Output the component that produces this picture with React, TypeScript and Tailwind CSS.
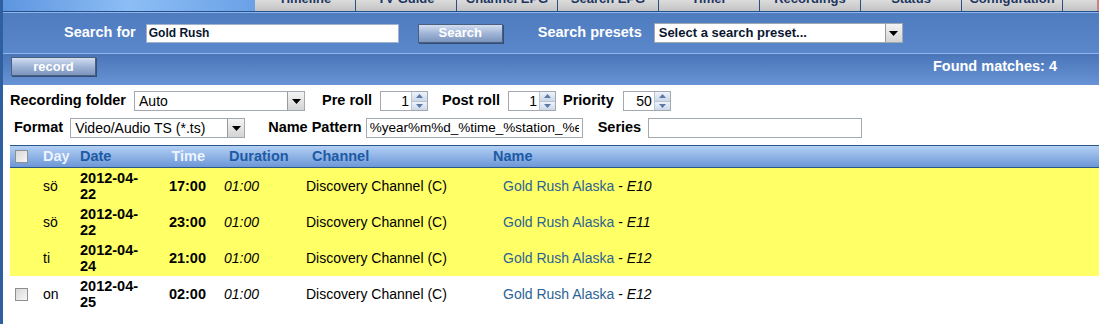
import React from "react";

const tabs = ["Timeline", "TV Guide", "Channel EPG", "Search EPG", "Timer", "Recordings", "Status", "Configuration"];

const rows = [
  { day: "sö", d1: "2012-04-", d2: "22", time: "17:00", ep: "E10", hl: true },
  { day: "sö", d1: "2012-04-", d2: "22", time: "23:00", ep: "E11", hl: true },
  { day: "ti", d1: "2012-04-", d2: "24", time: "21:00", ep: "E12", hl: true },
  { day: "on", d1: "2012-04-", d2: "25", time: "02:00", ep: "E12", hl: false },
];

const Arrow = () => (
  <div className="w-[17px] h-full flex items-center justify-center bg-gradient-to-b from-[#f4f4f4] to-[#d4d4d4] border-l border-[#9a9a9a]">
    <svg width="9" height="5" viewBox="0 0 9 5">
      <path d="M0 0h9L4.5 5z" fill="#000" />
    </svg>
  </div>
);

const Select = ({ w, text, bold }: { w: string; text: string; bold?: boolean }) => (
  <div className={`${w} h-[20px] flex border border-[#a3a9b1] bg-white`}>
    <div className={`flex-1 px-[4px] leading-[18px] truncate ${bold ? "font-bold text-[13px] text-[#0a1630]" : "text-[14px]"}`}>{text}</div>
    <Arrow />
  </div>
);

const Spin = ({ v }: { v: string }) => (
  <div className="w-[48px] h-[20px] flex border border-[#a3a9b1] bg-white">
    <div className="flex-1 text-right pr-[2px] leading-[18px] text-[14px]">{v}</div>
    <div className="w-[16px] flex flex-col border-l border-[#b9c4d4]">
      <div className="flex-1 flex items-center justify-center bg-gradient-to-b from-[#eef3fa] to-[#cbd7e8] border-b border-[#b9c4d4]">
        <svg width="7" height="4" viewBox="0 0 7 4"><path d="M0 4h7L3.5 0z" fill="#5b79a6" /></svg>
      </div>
      <div className="flex-1 flex items-center justify-center bg-gradient-to-b from-[#eef3fa] to-[#cbd7e8]">
        <svg width="7" height="4" viewBox="0 0 7 4"><path d="M0 0h7L3.5 4z" fill="#5b79a6" /></svg>
      </div>
    </div>
  </div>
);

const Check = () => (
  <div className="w-[13px] h-[13px] border border-[#8e8f8f] bg-gradient-to-br from-[#d6d6d6] to-[#f8f8f8]" />
);

const BlueButton = ({ label }: { label: string }) => (
  <div className="w-[85px] h-[19px] flex items-center justify-center border border-[#4a5f80] bg-gradient-to-b from-[#d3def0] via-[#9fb4d6] to-[#7d95bd] text-white font-bold text-[13px] shadow-[1px_1px_0_#33507a]">
    {label}
  </div>
);

export default function App() {
  return (
    <div className="w-[1099px] h-[324px] overflow-hidden bg-white border-l-[3px] border-[#2e5f9f] font-['Liberation_Sans',Arial,sans-serif] text-[14px] text-black">
      {/* top tabs */}
      <div className="h-[11px] flex overflow-hidden">
        <div className="w-[252px] bg-gradient-to-r from-[#5d95df] via-[#8dbdf4] to-[#6aa1e7]" />
        {tabs.map((t) => (
          <div key={t} className="w-[101px] border-r border-[#2b4f80] bg-gradient-to-b from-[#dcdcdc] to-[#c3c3c3] text-center text-[13px] leading-[13px] text-[#1c3560] font-bold">
            <div className="-mt-[8px]">{t}</div>
          </div>
        ))}
        <div className="flex-1 bg-gradient-to-b from-[#dcdcdc] to-[#c3c3c3] border-r-2 border-[#d08080]" />
      </div>
      <div className="h-[1px] bg-[#23508f]" />
      <div className="h-[1px] bg-[#8fb5ea]" />
      {/* search bar */}
      <div className="h-[40px] bg-gradient-to-b from-[#4f7bbf] to-[#5a88cb] flex items-center">
        <span className="ml-[61px] text-white font-bold text-[14.5px]">Search for</span>
        <div className="ml-[10px] w-[253px] h-[19px] bg-white border border-[#9fb2cf] pl-[2px] leading-[17px] font-bold text-[12px] text-[#0a1630]">Gold Rush</div>
        <div className="ml-[19px]"><BlueButton label="Search" /></div>
        <span className="ml-[35px] text-white font-bold text-[14.5px]">Search presets</span>
        <div className="ml-[12px]"><Select w="w-[249px]" text="Select a search preset..." bold /></div>
      </div>
      <div className="h-[1px] bg-[#8fb6ec]" />
      {/* record bar */}
      <div className="h-[31px] bg-gradient-to-b from-[#4a75b8] to-[#6894d6] flex items-center justify-between pl-[8px] pr-[42px]">
        <div className="-mt-[6px]"><BlueButton label="record" /></div>
        <span className="text-white font-bold text-[14.5px] -mt-[5px]">Found matches: 4</span>
      </div>
      {/* form */}
      <div className="pt-[6px] pl-[7px]">
        <div className="flex items-center h-[20px]">
          <span className="font-bold text-[14.5px]">Recording folder</span>
          <div className="ml-[8px]"><Select w="w-[171px]" text="Auto" /></div>
          <span className="ml-[17px] font-bold text-[14.5px]">Pre roll</span>
          <div className="ml-[8px]"><Spin v="1" /></div>
          <span className="ml-[14px] font-bold text-[14.5px]">Post roll</span>
          <div className="ml-[8px]"><Spin v="1" /></div>
          <span className="ml-[7px] font-bold text-[14.5px]">Priority</span>
          <div className="ml-[9px]"><Spin v="50" /></div>
        </div>
        <div className="flex items-center h-[20px] mt-[7px] pl-[4px]">
          <span className="font-bold text-[14.5px]">Format</span>
          <div className="ml-[7px]"><Select w="w-[175px]" text="Video/Audio TS (*.ts)" /></div>
          <span className="ml-[23px] font-bold text-[14.5px]">Name Pattern</span>
          <div className="ml-[4px] w-[217px] h-[20px] border border-[#a3a9b1] px-[3px] leading-[18px] overflow-hidden text-[13.5px]">
            <div className="w-[209px] overflow-hidden whitespace-nowrap">%year%m%d_%time_%station_%ev</div>
          </div>
          <span className="ml-[15px] font-bold text-[14.5px]">Series</span>
          <div className="ml-[7px] w-[214px] h-[20px] border border-[#a3a9b1]" />
        </div>
      </div>
      {/* table */}
      <div className="ml-[7px] mt-[7px]">
        <div className="h-[23px] flex items-center border-y border-[#2a5688] bg-gradient-to-b from-[#b3d0f4] to-[#6c97d7] font-bold text-[14.5px]">
          <div className="w-[33px] pl-[5px] flex items-center"><Check /></div>
          <div className="w-[37px] text-[#eef4ff]">Day</div>
          <div className="w-[80px] text-[#1d5aa4]">Date</div>
          <div className="w-[46px] text-right text-[#eef4ff] pr-[1px]">Time</div>
          <div className="w-[106px] pl-[23px] text-[#1d5aa4]">Duration</div>
          <div className="w-[181px] text-[#1d5aa4]">Channel</div>
          <div className="text-[#1d5aa4]">Name</div>
        </div>
        {rows.map((r, i) => (
          <div key={i} className={`h-[36px] flex items-center leading-[16px] ${r.hl ? "bg-[#ffff66]" : "bg-white"}`}>
            <div className="w-[33px] pl-[5px] flex items-center">{r.hl ? null : <Check />}</div>
            <div className="w-[37px]">{r.day}</div>
            <div className="w-[80px] font-bold text-[14.5px]">
              {r.d1}
              <br />
              {r.d2}
            </div>
            <div className="w-[46px] text-right font-bold text-[14.5px]">{r.time}</div>
            <div className="w-[100px] pl-[18px] italic">01:00</div>
            <div className="w-[197px]">Discovery Channel (C)</div>
            <div>
              <span className="text-[#2d6394]">Gold Rush Alaska</span> - <span className="italic">{r.ep}</span>
            </div>
          </div>
        ))}
      </div>
    </div>
  );
}
